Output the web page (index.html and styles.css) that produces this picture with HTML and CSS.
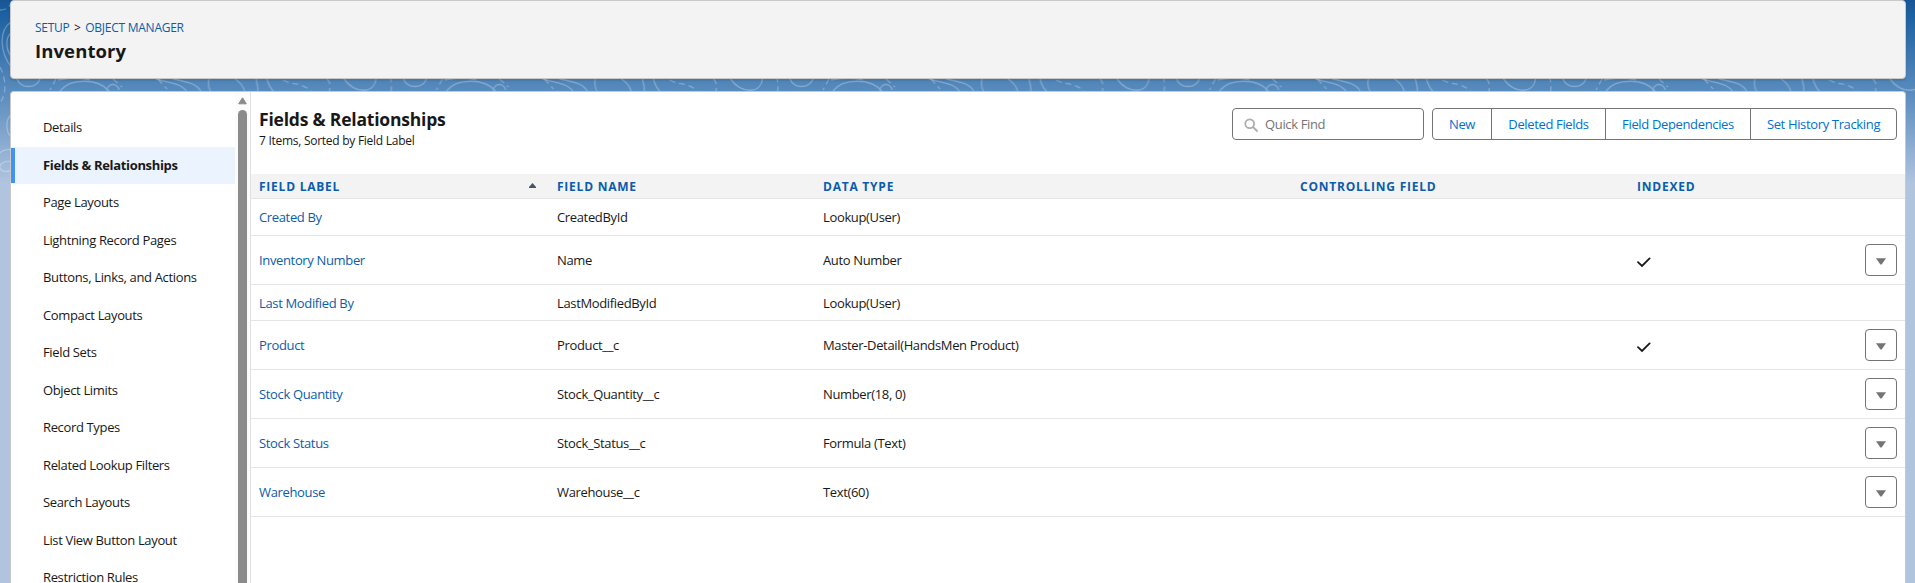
FILE: index.html
```html
<!DOCTYPE html>
<html lang="en">
<head>
<meta charset="utf-8">
<title>Inventory</title>
<link rel="stylesheet" href="styles.css">
</head>
<body>
<svg class="backdrop" width="1915" height="200" aria-hidden="true">
  <defs>
    <pattern id="topo" width="386.5" height="200" patternUnits="userSpaceOnUse">
      <g fill="none" stroke="#fff" stroke-opacity=".27" stroke-width="1.3">
        <path d="M11 22C-1 30-1 52 12 68M11 33C5 38 6 50 11 56M17 79C21 89 36 89 40 79M60 91C70 78 98 78 109 91M107 91a6 6 0 0 1 12-1M58 80C68 78 80 77 90 80M156 79C172 83 182 84 187 92M173 79C188 82 198 84 201 92M209 79q-2 7 2 13M235 79q8 5 10 13M256 79q2 7 2 13M267 79q2 8 7 13M344 79C355 94 374 94 376 79M11 115C5 120 6 132 11 137M12 150C0 148-6 158 0 163M12 162C5 160-1 164 0 168C2 173 9 172 12 169"/>
        <path stroke-dasharray="6 4" d="M0 10q8 0 11-7M0 67C5 76 6 88 4 94C3 98 2 100 0 103M56 79L50 90M113 79l9 8M158 79l9 10M283 80c12 6 18 2 28 11M327 79q5 5 2 13M389 79v12"/>
      </g>
    </pattern>
  </defs>
  <rect width="1915" height="200" fill="url(#topo)"/>
</svg>
<div class="page">
  <header class="header">
    <nav class="crumbs"><a>SETUP</a><span class="sep">&gt;</span><a>OBJECT MANAGER</a></nav>
    <h1 class="object-name">Inventory</h1>
  </header>
  <main class="panel">
    <aside class="sidebar">
      <ul class="menu">
        <li>Details</li>
        <li class="active">Fields &amp; Relationships</li>
        <li>Page Layouts</li>
        <li>Lightning Record Pages</li>
        <li>Buttons, Links, and Actions</li>
        <li>Compact Layouts</li>
        <li>Field Sets</li>
        <li>Object Limits</li>
        <li>Record Types</li>
        <li>Related Lookup Filters</li>
        <li>Search Layouts</li>
        <li>List View Button Layout</li>
        <li>Restriction Rules</li>
      </ul>
      <div class="scrollbar">
        <svg width="9" height="8" viewBox="0 0 9 8"><path d="M4.5.8L8.3 6.8H.7z" fill="#8b8b8b" stroke="#8b8b8b" stroke-linejoin="round"/></svg>
        <div class="thumb"></div>
      </div>
    </aside>
    <section class="content">
      <div class="toolbar">
        <div class="heading">
          <h2 class="title">Fields &amp; Relationships</h2>
          <p class="subtitle">7 Items, Sorted by Field Label</p>
        </div>
        <div class="search">
          <svg width="14" height="14" viewBox="0 0 14 14" fill="none" stroke="#aeaeae" stroke-width="1.8"><circle cx="5.7" cy="5.7" r="4.4"/><path d="M9 9l4 4" stroke-linecap="round"/></svg>
          <span>Quick Find</span>
        </div>
        <div class="buttons">
          <button class="b1">New</button><button class="b2">Deleted Fields</button><button class="b3">Field Dependencies</button><button class="b4">Set History Tracking</button>
        </div>
      </div>
      <div class="table">
        <div class="row head">
          <span class="sorted">FIELD LABEL <svg width="7" height="5" viewBox="0 0 7 5"><path d="M3.5 0L7 4v1H0V4z" fill="#44546a"/></svg></span>
          <span>FIELD NAME</span><span>DATA TYPE</span><span>CONTROLLING FIELD</span><span>INDEXED</span><span></span>
        </div>
        <div class="row r37"><a>Created By</a><span>CreatedById</span><span>Lookup(User)</span><span></span><span></span><span></span></div>
        <div class="row"><a>Inventory Number</a><span>Name</span><span>Auto Number</span><span></span><span><svg class="check" width="14" height="11" viewBox="0 0 14 11"><path d="M1 5.2L5 9L12.6 1.4"/></svg></span><span class="action"><svg width="10" height="7" viewBox="0 0 10 7"><path d="M0 .3h10L5.8 6.2q-.8.8-1.6 0z"/></svg></span></div>
        <div class="row r36"><a>Last Modified By</a><span>LastModifiedById</span><span>Lookup(User)</span><span></span><span></span><span></span></div>
        <div class="row"><a>Product</a><span>Product__c</span><span>Master-Detail(HandsMen Product)</span><span></span><span><svg class="check" width="14" height="11" viewBox="0 0 14 11"><path d="M1 5.2L5 9L12.6 1.4"/></svg></span><span class="action"><svg width="10" height="7" viewBox="0 0 10 7"><path d="M0 .3h10L5.8 6.2q-.8.8-1.6 0z"/></svg></span></div>
        <div class="row"><a>Stock Quantity</a><span>Stock_Quantity__c</span><span>Number(18, 0)</span><span></span><span></span><span class="action"><svg width="10" height="7" viewBox="0 0 10 7"><path d="M0 .3h10L5.8 6.2q-.8.8-1.6 0z"/></svg></span></div>
        <div class="row"><a>Stock Status</a><span>Stock_Status__c</span><span>Formula (Text)</span><span></span><span></span><span class="action"><svg width="10" height="7" viewBox="0 0 10 7"><path d="M0 .3h10L5.8 6.2q-.8.8-1.6 0z"/></svg></span></div>
        <div class="row"><a>Warehouse</a><span>Warehouse__c</span><span>Text(60)</span><span></span><span></span><span class="action"><svg width="10" height="7" viewBox="0 0 10 7"><path d="M0 .3h10L5.8 6.2q-.8.8-1.6 0z"/></svg></span></div>
      </div>
    </section>
  </main>
</div>
</body>
</html>
```
FILE: styles.css
```css
* { box-sizing: border-box; }
body {
  margin: 0;
  height: 583px;
  overflow: hidden;
  font: 13px/20px "Open Sans", "Noto Sans", sans-serif;
  letter-spacing: -0.35px;
  color: #181818;
  background: #b0c4df linear-gradient(#195594, #1b5f9f 12px, #5b8dbf 95px, #b0c4df 183px) no-repeat;
}
.backdrop { position: absolute; left: 0; top: 0; }
.page {
  position: relative;
  height: 583px;
  padding: 0 9px 0 10px;
  display: flex;
  flex-direction: column;
  gap: 12px;
}
.header {
  height: 79px;
  flex: none;
  padding: 17px 24px 0;
  background: #f3f3f3;
  border: 1px solid #c9c9c9;
  border-radius: 4px;
  box-shadow: 0 2px 2px rgba(0, 0, 0, .1);
}
.crumbs { display: flex; line-height: 20px; font-size: 12px; letter-spacing: -0.25px; }
.sep { margin: 0 4.5px; }
a { color: #0b5cab; }
.object-name { margin: 0; font-size: 18.5px; line-height: 26px; font-weight: 700; letter-spacing: 0.1px; }
.panel {
  flex: 1;
  display: flex;
  background: #fff;
  border: 1px solid #c9c9c9;
  border-bottom: 0;
  border-radius: 4px 4px 0 0;
  overflow: hidden;
}
.sidebar { width: 239px; flex: none; display: flex; }
.menu { width: 224px; margin: 0; padding: 17px 0 0; list-style: none; }
.menu li { height: 37.5px; padding: 8px 0 0 32px; white-space: nowrap; line-height: 21px; }
.menu .active {
  font-weight: 700;
  letter-spacing: -0.33px;
  background:
    linear-gradient(#4192f6, #4192f6) 0 1px / 4px 35px no-repeat,
    linear-gradient(#ebf4fe, #ebf4fe) 0 0 / 100% 37px no-repeat;
}
.scrollbar {
  width: 15px;
  padding: 5px 3px 0;
  background: #fcfcfc;
  display: flex;
  flex-direction: column;
  align-items: center;
  gap: 5px;
}
.thumb { width: 9px; flex: 1; background: #8b8b8b; border-radius: 5px 5px 0 0; }
.content { flex: 1; border-left: 1px solid #e0e0e0; }
.toolbar { height: 82px; display: flex; padding: 16px 8px 0; }
.heading { flex: 1; }
.title { margin: -1px 0 1px; font-size: 17.5px; line-height: 24px; font-weight: 700; letter-spacing: -0.2px; }
.subtitle { margin: 0; font-size: 12px; line-height: 18px; letter-spacing: -0.27px; }
.search {
  width: 192px;
  height: 32px;
  padding-left: 11px;
  margin-right: 8px;
  display: flex;
  align-items: center;
  gap: 7px;
  color: #747474;
  border: 1px solid #747474;
  border-radius: 4px;
}
.search svg { margin-top: 2px; }
.buttons { display: flex; height: 32px; border: 1px solid #747474; border-radius: 4px; }
.buttons button {
  padding: 0;
  border: 0;
  border-left: 1px solid #747474;
  background: none;
  font: inherit;
  letter-spacing: -0.35px;
  color: #0070d2;
}
.buttons .b1 { width: 58px; border-left: 0; }
.buttons .b2 { width: 114px; }
.buttons .b3 { width: 145px; }
.buttons .b4 { width: 146px; }
.row {
  height: 49px;
  display: grid;
  grid-template-columns: 298px 266px 477px 337px 1fr 32px;
  align-items: center;
  padding: 0 8px;
  border-bottom: 1px solid #e5e5e5;
}
.row.head {
  height: 25px;
  padding-top: 1px;
  font-weight: 700;
  font-size: 12px;
  letter-spacing: .77px;
  color: #0b5cab;
  background: #f3f3f3;
}
.row.r37 { height: 37px; }
.row.r36 { height: 36px; }
.sorted { display: flex; justify-content: space-between; align-items: center; padding-right: 21px; }
.sorted svg { margin-bottom: 2px; }
.check { display: block; margin-top: 4px; fill: none; stroke: #181818; stroke-width: 1.8; stroke-linecap: round; }
.action {
  height: 32px;
  display: flex;
  align-items: center;
  justify-content: center;
  border: 1px solid #747474;
  border-radius: 4px;
  fill: #747474;
}
.action svg { margin-top: 2px; }
```
